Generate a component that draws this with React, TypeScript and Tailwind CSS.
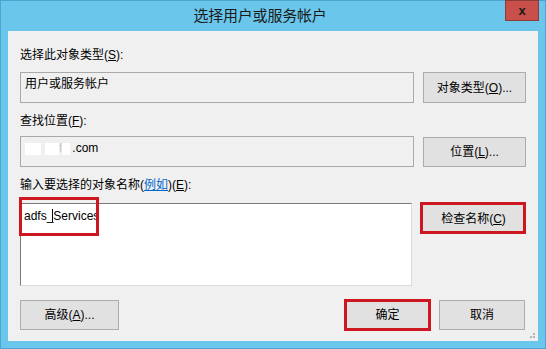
import React from 'react';

const font = { fontFamily: '"Liberation Sans", "Noto Sans CJK SC", sans-serif' };

function Btn({ children, className = '' }: { children: React.ReactNode; className?: string }) {
  return (
    <div
      className={`flex items-center justify-center bg-[#e1e1e1] border border-[#adadad] text-[12px] text-black ${className}`}
    >
      {children}
    </div>
  );
}

export default function App() {
  return (
    <div className="w-[546px] h-[349px] bg-[#6ac7eb] border border-[#4ba6cf] flex flex-col" style={font}>
      {/* title bar */}
      <div className="relative h-[30px] shrink-0 flex items-center justify-center pr-[26px]">
        <span className="text-[15px] text-[#1b1b1b] tracking-[-0.2px]">选择用户或服务帐户</span>
        <div className="absolute right-[6px] top-[-1px] w-[34px] h-[21px] bg-[#c9504a] border border-[#8c3b36] flex items-center justify-center">
          <span className="text-[13px] font-bold text-[#1a1a1a] leading-none">x</span>
        </div>
      </div>

      {/* client area */}
      <div className="relative mx-[7px] mb-[7px] flex-1 bg-[#f0f0f0] pl-[12px] pr-[12px] text-[12px] text-black">
        {/* row 1 */}
        <div className="pt-[16px] h-[41px] leading-[16px]">
          选择此对象类型(<u>S</u>):
        </div>
        <div className="flex gap-[9px]">
          <div className="w-[394px] h-[31px] border border-[#a9a9a9] bg-[#f0f0f0] px-[4px] pt-[3px] leading-[16px]">
            用户或服务帐户
          </div>
          <Btn className="w-[103px] h-[31px]">
            对象类型(<u>O</u>)...
          </Btn>
        </div>

        {/* row 2 */}
        <div className="pt-[10px] h-[33px] leading-[16px]">
          查找位置(<u>F</u>):
        </div>
        <div className="flex gap-[9px]">
          <div className="relative w-[394px] h-[31px] border border-[#a9a9a9] bg-[#f0f0f0] px-[4px] pt-[3px] leading-[16px]">
            <span className="inline-block w-[16px] h-[12px] bg-white align-middle" />
            <span className="inline-block w-[4px]" />
            <span className="inline-block w-[14px] h-[12px] bg-white align-middle" />
            <span className="text-[#c9c9c9]">f</span>
            <span className="inline-block w-[8px] h-[12px] bg-white align-middle" />
            <span className="ml-[2px]">.com</span>
          </div>
          <Btn className="w-[103px] h-[30px] mt-[1px]">
            位置(<u>L</u>)...
          </Btn>
        </div>

        {/* row 3 */}
        <div className="pt-[10px] h-[36px] leading-[16px]">
          输入要选择的对象名称(<u className="text-[#0066cc]">例如</u>)(<u>E</u>):
        </div>
        <div className="flex gap-[9px]">
          <div className="relative w-[392px] h-[83px] bg-white border border-[#dcdcdc] border-t-[#7a7a7a] border-l-[#7a7a7a] px-[3px] pt-[4px] leading-[16px]">
            <span>adfs_</span>
            <span className="inline-block w-px h-[13px] bg-black align-[-2px] -ml-px" />
            <span>Services</span>
          </div>
          <div className="relative mt-[1px]">
            <Btn className="w-[103px] h-[29px] ml-[1px]">
              检查名称(<u>C</u>)
            </Btn>
            <div className="absolute -left-px -top-[2px] w-[106px] h-[32px] border-[3px] border-[#cc1620]" />
          </div>
        </div>

        {/* bottom buttons */}
        <div className="flex mt-[14px]">
          <Btn className="w-[99px] h-[30px]">
            高级(<u>A</u>)...
          </Btn>
          <div className="relative ml-auto mt-[1px]">
            <Btn className="w-[83px] h-[28px] mx-[2px]">确定</Btn>
            <div className="absolute left-0 -top-[2px] w-[87px] h-[32px] border-[3px] border-[#cc1620]" />
          </div>
          <Btn className="w-[86px] h-[30px] ml-[8px] mr-[1px]">取消</Btn>
        </div>

        {/* red box around typed name */}
        <div className="absolute left-[11px] top-[166px] w-[80px] h-[39px] border-[3px] border-[#cc1620]" />

        {/* resize grip */}
        <div className="absolute right-[3px] bottom-[3px] flex flex-col gap-[1px] items-end">
          <div className="w-[2px] h-[2px] bg-[#b5b5b5]" />
          <div className="flex gap-[1px]">
            <div className="w-[2px] h-[2px] bg-[#b5b5b5]" />
            <div className="w-[2px] h-[2px] bg-[#b5b5b5]" />
          </div>
        </div>
      </div>
    </div>
  );
}
